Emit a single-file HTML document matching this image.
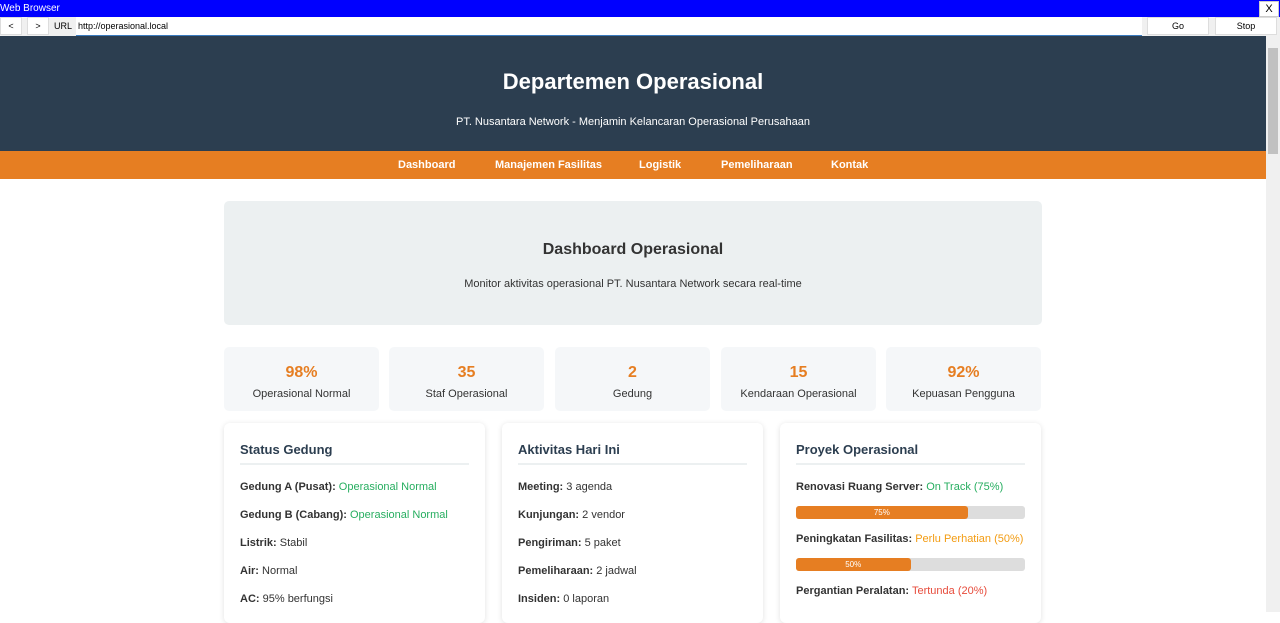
<!DOCTYPE html>
<html><head><style>
*{margin:0;padding:0;box-sizing:border-box}
body{width:1280px;height:612px;overflow:hidden;font-family:"Liberation Sans",sans-serif;background:#fff;position:relative}
.abs{position:absolute}
.tb{left:0;top:0;width:1280px;height:17px;background:#0000ff;color:#fff;font-size:10px;line-height:17px}
.x{right:1px;top:1px;width:20px;height:16px;background:#fff;color:#000;border:1px solid #ccc;text-align:center;font-size:11px;line-height:14px}
.ub{left:0;top:17px;width:1280px;height:19px;background:#f0f0f0;font-size:9px}
.btn{background:#fff;border:1px solid #ddd;text-align:center;line-height:17px;height:18px;top:0}
.main{left:0;top:36px;width:1266px;height:576px;background:#fff}
.sb{left:1266px;top:36px;width:14px;height:576px;background:#f0f0f0}
.hd{left:0;top:0;width:1266px;height:115px;background:#2c3e50;color:#fff;text-align:center}
.nav{left:0;top:115px;width:1266px;height:28px;background:#e67e22;color:#fff;font-size:11px;font-weight:bold;line-height:28px}
.hero{left:224px;top:165px;width:818px;height:124px;background:#ecf0f1;border-radius:5px;text-align:center;color:#333}
.st{top:311px;width:155px;height:64px;background:#f5f7f9;border-radius:5px;text-align:center}
.st b{display:block;color:#e67e22;font-size:16px;margin-top:17px;height:20px}
.st span{font-size:11px;color:#333;display:block;margin-top:4px}
.cd{top:387px;width:261px;height:200px;background:#fff;border-radius:6px;box-shadow:0 1px 6px rgba(0,0,0,.12);padding:0 16px;color:#333;font-size:11px}
.cd h3{font-size:13px;color:#2c3e50;margin-top:19px;height:23px;border-bottom:2px solid #ecf0f1;padding-bottom:0}
.cd p{height:28px;line-height:28px}
.cd p:first-of-type{margin-top:8px}
.g{color:#27ae60}.o{color:#f39c12}.r{color:#e74c3c}
.pb{height:13px;background:#ddd;border-radius:3px;margin:5px 0 6px;position:relative}
.pb div{height:13px;background:#e67e22;border-radius:3px;color:#fff;font-size:8px;text-align:center;line-height:13px}
</style></head><body>
<div class="abs tb">Web Browser</div>
<div class="abs x">X</div>
<div class="abs ub">
<div class="abs btn" style="left:0;width:22px">&lt;</div>
<div class="abs btn" style="left:27px;width:22px">&gt;</div>
<div class="abs" style="left:54px;top:0;line-height:19px">URL</div>
<div class="abs" style="left:76px;top:0;width:1066px;height:19px;background:#fff;line-height:19px;padding-left:2px;border-bottom:1px solid #3a7bbf">http://operasional.local</div>
<div class="abs btn" style="left:1147px;width:62px">Go</div>
<div class="abs btn" style="left:1215px;width:62px">Stop</div>
</div>
<div class="abs sb"><div class="abs" style="left:2px;top:12px;width:10px;height:106px;background:#c1c1c1"></div></div>
<div class="abs main">
<div class="abs hd"><div style="font-size:22px;font-weight:bold;margin-top:33px">Departemen Operasional</div><div style="font-size:11px;margin-top:21px">PT. Nusantara Network - Menjamin Kelancaran Operasional Perusahaan</div></div>
<div class="abs nav">
<span class="abs" style="left:398px">Dashboard</span><span class="abs" style="left:495px">Manajemen Fasilitas</span><span class="abs" style="left:639px">Logistik</span><span class="abs" style="left:721px">Pemeliharaan</span><span class="abs" style="left:831px">Kontak</span></div>
<div class="abs hero"><div style="font-size:16px;font-weight:bold;margin-top:40px">Dashboard Operasional</div><div style="font-size:11px;margin-top:19px">Monitor aktivitas operasional PT. Nusantara Network secara real-time</div></div>
<div class="abs st" style="left:224px"><b>98%</b><span>Operasional Normal</span></div>
<div class="abs st" style="left:389px"><b>35</b><span>Staf Operasional</span></div>
<div class="abs st" style="left:555px"><b>2</b><span>Gedung</span></div>
<div class="abs st" style="left:721px"><b>15</b><span>Kendaraan Operasional</span></div>
<div class="abs st" style="left:886px"><b>92%</b><span>Kepuasan Pengguna</span></div>
<div class="abs cd" style="left:224px"><h3>Status Gedung</h3>
<p><b>Gedung A (Pusat):</b> <span class="g">Operasional Normal</span></p>
<p><b>Gedung B (Cabang):</b> <span class="g">Operasional Normal</span></p>
<p><b>Listrik:</b> Stabil</p><p><b>Air:</b> Normal</p><p><b>AC:</b> 95% berfungsi</p></div>
<div class="abs cd" style="left:502px"><h3>Aktivitas Hari Ini</h3>
<p><b>Meeting:</b> 3 agenda</p><p><b>Kunjungan:</b> 2 vendor</p><p><b>Pengiriman:</b> 5 paket</p><p><b>Pemeliharaan:</b> 2 jadwal</p><p><b>Insiden:</b> 0 laporan</p></div>
<div class="abs cd" style="left:780px"><h3>Proyek Operasional</h3>
<p><b>Renovasi Ruang Server:</b> <span class="g">On Track (75%)</span></p>
<div class="pb"><div style="width:75%">75%</div></div>
<p><b>Peningkatan Fasilitas:</b> <span class="o">Perlu Perhatian (50%)</span></p>
<div class="pb"><div style="width:50%">50%</div></div>
<p><b>Pergantian Peralatan:</b> <span class="r">Tertunda (20%)</span></p></div>
</div>
</body></html>
